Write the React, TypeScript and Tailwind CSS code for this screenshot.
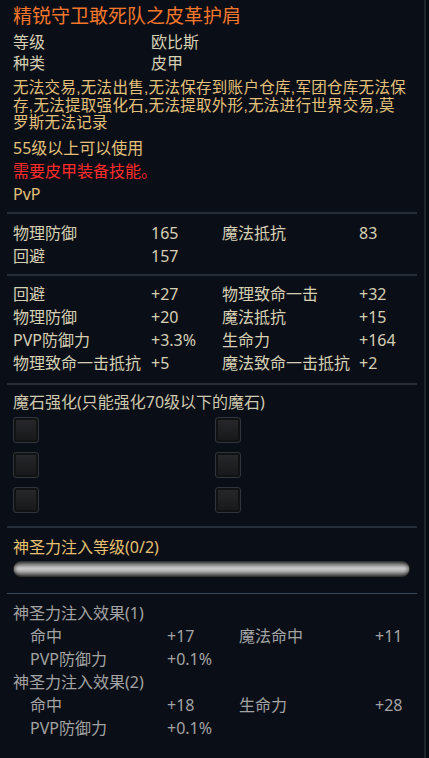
import React from "react";

const FONT = { fontFamily: '"Noto Sans", "Noto Sans CJK SC", sans-serif' };
const TIGHT = { fontFamily: '"Liberation Sans", "Noto Sans CJK SC", sans-serif' };

type Stat = [string, string, string?, string?];

const baseStats: Stat[] = [
  ["物理防御", "165", "魔法抵抗", "83"],
  ["回避", "157"],
];

const bonusStats: Stat[] = [
  ["回避", "+27", "物理致命一击", "+32"],
  ["物理防御", "+20", "魔法抵抗", "+15"],
  ["PVP防御力", "+3.3%", "生命力", "+164"],
  ["物理致命一击抵抗", "+5", "魔法致命一击抵抗", "+2"],
];

const Divider = ({ className = "" }: { className?: string }) => (
  <div className={`h-[2px] bg-[#252e38] ${className}`} />
);

const StatRow = ({ row }: { row: Stat }) => (
  <div className="grid grid-cols-[138px_71px_137px_1fr] h-[23px] leading-[23px] text-[#d6cfb4] whitespace-nowrap">
    <span>{row[0]}</span>
    <span>{row[1]}</span>
    <span>{row[2] ?? ""}</span>
    <span>{row[3] ?? ""}</span>
  </div>
);

const InfuseRow = ({ row }: { row: Stat }) => (
  <div className="grid grid-cols-[137px_72px_136px_1fr] pl-[17px] h-[23px] leading-[23px] text-[#a3a3a3] whitespace-nowrap">
    <span>{row[0]}</span>
    <span>{row[1]}</span>
    <span>{row[2] ?? ""}</span>
    <span>{row[3] ?? ""}</span>
  </div>
);

const GemSlot = () => (
  <div className="w-[26px] h-[26px] rounded-[3px] border border-[#30353a] bg-gradient-to-b from-[#27292c] to-[#161719] shadow-[inset_0_0_0_2px_#111214]" />
);

export default function App() {
  return (
    <div
      className="w-[429px] h-[758px] bg-[#0a0f17] flex overflow-hidden text-[16px]"
      style={FONT}
    >
      <div className="w-[424px] px-[7px] flex flex-col">
        <div className="pl-[6px]">
          <div className="h-[32px] leading-[32px] text-[19px] text-[#f4772b]">
            精锐守卫敢死队之皮革护肩
          </div>
          <div className="grid grid-cols-[138px_1fr] h-[21px] leading-[21px] text-[#d6cfb4]">
            <span>等级</span>
            <span>欧比斯</span>
          </div>
          <div className="grid grid-cols-[138px_1fr] h-[21px] leading-[21px] text-[#d6cfb4]">
            <span>种类</span>
            <span>皮甲</span>
          </div>
          <div
            className="mt-[5px] text-[15.5px] leading-[17.5px] tracking-[0.3px] text-[#e3c17a] whitespace-nowrap"
            style={TIGHT}
          >
            <div>无法交易,无法出售,无法保存到账户仓库,军团仓库无法保</div>
            <div>存,无法提取强化石,无法提取外形,无法进行世界交易,莫</div>
            <div>罗斯无法记录</div>
          </div>
          <div className="mt-[5px] leading-[23px]">
            <div className="text-[#e3c17a]">55级以上可以使用</div>
            <div className="text-[#ff2b2b]">需要皮甲装备技能。</div>
            <div className="text-[#e3c17a]">PvP</div>
          </div>
        </div>

        <Divider className="mt-[6.5px]" />
        <div className="pl-[6px] mt-[7.5px]">
          {baseStats.map((r, i) => (
            <StatRow key={i} row={r} />
          ))}
        </div>

        <Divider className="mt-[6.5px]" />
        <div className="pl-[6px] mt-[7px]">
          {bonusStats.map((r, i) => (
            <StatRow key={i} row={r} />
          ))}
        </div>

        <Divider className="mt-[8px]" />
        <div className="pl-[6px] mt-[6px]">
          <div className="h-[23px] leading-[23px] text-[#cfc8ae]">
            魔石强化(只能强化70级以下的魔石)
          </div>
          <div className="mt-[3px] grid grid-cols-[202px_1fr] gap-y-[9px]">
            <GemSlot />
            <GemSlot />
            <GemSlot />
            <GemSlot />
            <GemSlot />
            <GemSlot />
          </div>
        </div>

        <Divider className="mt-[13px]" />
        <div className="pl-[6px] mt-[8px]">
          <div className="h-[23px] leading-[23px] text-[#e6c071]">
            神圣力注入等级(0/2)
          </div>
          <div className="mt-[2px] w-[397px] h-[16px] rounded-full border border-[#333] bg-[linear-gradient(to_bottom,#4a4a4a_0%,#828282_18%,#bdbdbd_38%,#cacaca_50%,#a8a8a8_68%,#6c6c6c_88%,#484848_100%)] shadow-[inset_3px_0_3px_-1px_rgba(0,0,0,0.35),inset_-3px_0_3px_-1px_rgba(0,0,0,0.35)]" />
        </div>

        <div className="mt-[16px] h-px bg-[#34465e]" />
        <div className="pl-[6px] mt-[8px]">
          <div className="h-[23px] leading-[23px] text-[#a3a3a3]">神圣力注入效果(1)</div>
          <InfuseRow row={["命中", "+17", "魔法命中", "+11"]} />
          <InfuseRow row={["PVP防御力", "+0.1%"]} />
          <div className="h-[23px] leading-[23px] text-[#a3a3a3]">神圣力注入效果(2)</div>
          <InfuseRow row={["命中", "+18", "生命力", "+28"]} />
          <InfuseRow row={["PVP防御力", "+0.1%"]} />
        </div>
      </div>
      <div className="w-[2px] h-full bg-[#1f252c]" />
      <div className="w-[3px] h-full bg-[#080b10]" />
    </div>
  );
}
